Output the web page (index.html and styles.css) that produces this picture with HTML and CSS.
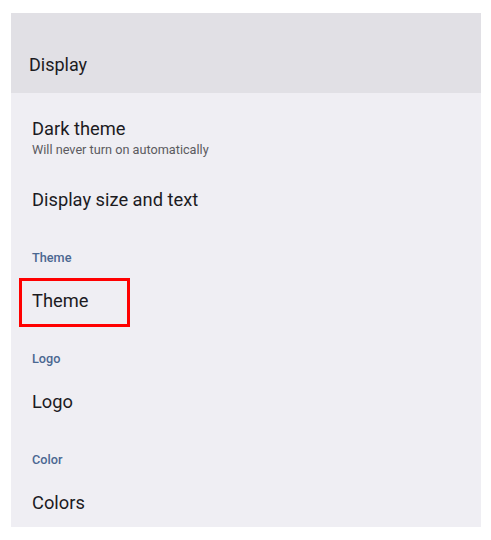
FILE: index.html
```html
<!DOCTYPE html>
<html>
<head>
    <title>Display</title>
    <meta name="viewport" content="width=device-width, initial-scale=1">
    <link rel="stylesheet" href="styles.css">
</head>
<body>
    <div class="panel">
        <div class="app-bar">Display</div>
        <div class="prefs">
            <div class="pref">
                <div class="pref-title">Dark theme</div>
                <div class="pref-summary">Will never turn on automatically</div>
            </div>
            <div class="pref">
                <div class="pref-title">Display size and text</div>
            </div>

            <div class="category">Theme</div>
            <div class="pref pref-marked">
                <span class="highlight"><span class="pref-title">Theme</span></span>
            </div>

            <div class="category">Logo</div>
            <div class="pref">
                <div class="pref-title">Logo</div>
            </div>

            <div class="category">Color</div>
            <div class="pref">
                <div class="pref-title">Colors</div>
            </div>
        </div>
    </div>
</body>
</html>
```

FILE: styles.css
```css
body {
    margin: 0;
    padding: 13px 10px 13px 11px;
    background: #ffffff;
    font-family: Roboto, "Noto Sans", sans-serif;
    color: #1c1b1f;
}
.panel {
    width: 470px;
    height: 514px;
    overflow: hidden;
    background: #efeef3;
}
.app-bar {
    height: 80px;
    box-sizing: border-box;
    display: flex;
    align-items: flex-end;
    padding: 0 0 16px 18px;
    background: #e1e0e5;
    font-size: 18px;
    line-height: 24px;
}
.prefs {
    padding-top: 9.5px;
}
.pref {
    padding: 14.5px 21px;
}
.pref-title {
    font-size: 18.3px;
    line-height: 24px;
}
.pref-summary {
    font-size: 12.7px;
    line-height: 18px;
    color: #5b5a60;
}
.category {
    padding: 23.5px 21px 8.5px;
    font-size: 12.7px;
    line-height: 16px;
    font-weight: 500;
    color: #4a6791;
}
.pref-marked {
    padding: 3px 0 0 8px;
    height: 50px;
}
.highlight {
    display: inline-block;
    width: 111px;
    height: 49px;
    box-sizing: border-box;
    border: 3px solid #ff0000;
    padding: 8px 0 0 10px;
}
```
